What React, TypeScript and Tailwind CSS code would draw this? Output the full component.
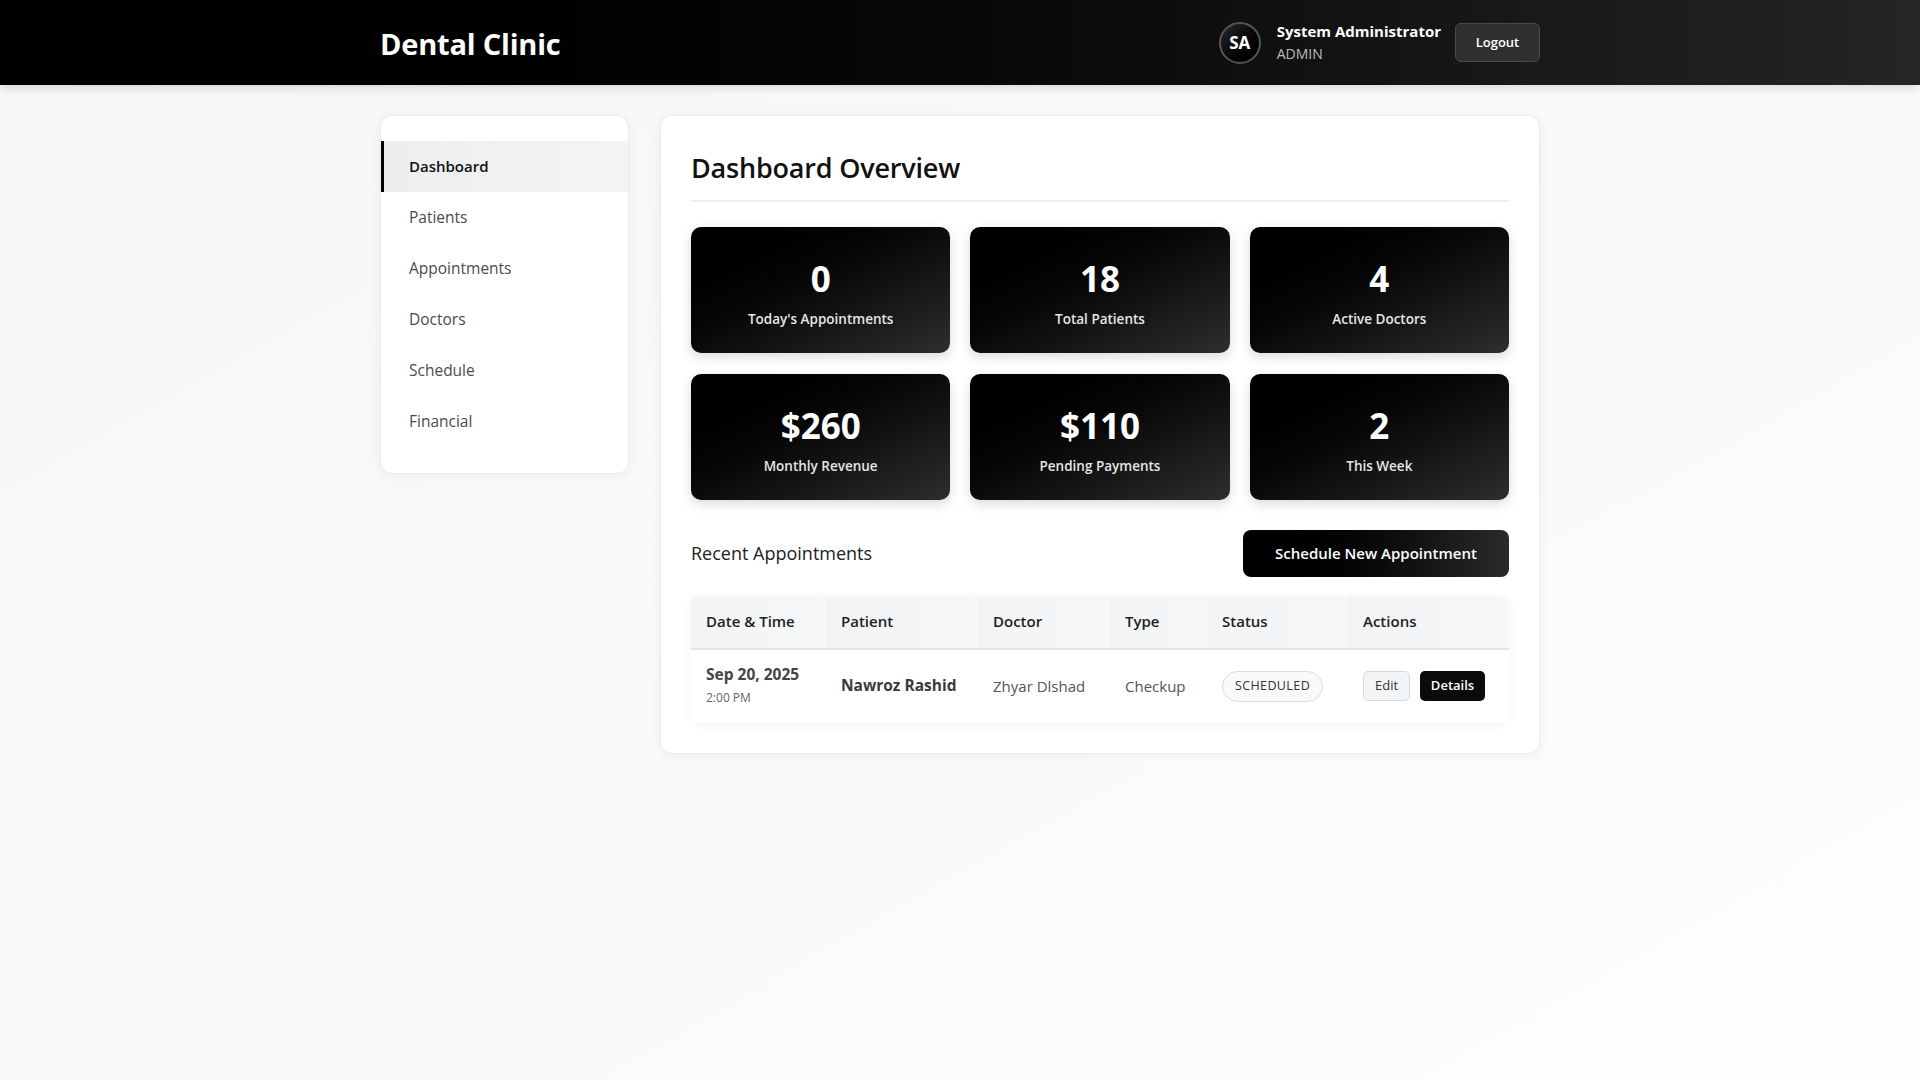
import React from 'react';

const navItems = ['Dashboard', 'Patients', 'Appointments', 'Doctors', 'Schedule', 'Financial'];

const stats = [
  { value: '0', label: "Today's Appointments" },
  { value: '18', label: 'Total Patients' },
  { value: '4', label: 'Active Doctors' },
  { value: '$260', label: 'Monthly Revenue' },
  { value: '$110', label: 'Pending Payments' },
  { value: '2', label: 'This Week' },
];

const columns = [
  { title: 'Date & Time', w: 'w-[135px]' },
  { title: 'Patient', w: 'w-[152px]' },
  { title: 'Doctor', w: 'w-[132px]' },
  { title: 'Type', w: 'w-[97px]' },
  { title: 'Status', w: 'w-[141px]' },
  { title: 'Actions', w: 'flex-1' },
];

export default function App() {
  return (
    <div
      className="min-h-screen bg-gradient-to-br from-[#f6f6f6] to-[#fdfdfd] text-[#222]"
      style={{ fontFamily: '"Open Sans", "Noto Sans", sans-serif' }}
    >
      {/* Header */}
      <header className="h-[85px] bg-gradient-to-r from-[#000] to-[#252525] shadow-[0_2px_10px_rgba(0,0,0,0.15)]">
        <div className="max-w-[1200px] mx-auto px-5 h-full flex items-center justify-between">
          <h1 className="text-[29px] font-bold text-white tracking-[-0.2px] mt-[2px]">Dental Clinic</h1>
          <div className="flex items-center">
            <div className="w-[42px] h-[42px] rounded-full bg-gradient-to-br from-[#2a2a2a] to-[#000] border-2 border-[#555] flex items-center justify-center text-white font-bold text-[17px]">
              SA
            </div>
            <div className="ml-4 flex flex-col leading-tight">
              <span className="text-white font-bold text-[15px]">System Administrator</span>
              <span className="text-[#bdbdbd] text-[14px] mt-[4px]">ADMIN</span>
            </div>
            <button className="ml-[14px] w-[85px] h-[39px] rounded-[6px] bg-[#2f2f2f] border border-[#4a4a4a] text-white text-[13px] font-semibold">
              Logout
            </button>
          </div>
        </div>
      </header>

      <div className="max-w-[1200px] mx-auto px-5 pt-[30px] flex gap-[31px] items-start">
        {/* Sidebar */}
        <aside className="w-[249px] shrink-0 bg-white rounded-[12px] border border-[#ececec] shadow-[0_2px_12px_rgba(0,0,0,0.05)] pt-[25px] pb-[26px] overflow-hidden">
          {navItems.map((item, i) => (
            <div
              key={item}
              className={
                i === 0
                  ? 'h-[51px] flex items-center pl-[25px] border-l-[3px] border-black bg-gradient-to-r from-[#eceef0] to-[#f3f4f6] text-[#111] font-semibold text-[15px]'
                  : 'h-[51px] flex items-center pl-[28px] text-[#4b4b4b] font-medium text-[15.5px]'
              }
            >
              {item}
            </div>
          ))}
        </aside>

        {/* Main */}
        <main className="flex-1 bg-white rounded-[12px] border border-[#ececec] shadow-[0_2px_12px_rgba(0,0,0,0.05)] px-[30px] pt-[32px] pb-[30px]">
          <h2 className="text-[27px] font-semibold text-[#111] pb-[11px] border-b-2 border-[#efefef] tracking-[-0.2px]">
            Dashboard Overview
          </h2>

          <div className="grid grid-cols-3 gap-x-[20px] gap-y-[21px] mt-[25px]">
            {stats.map((s) => (
              <div
                key={s.label}
                className="h-[126px] rounded-[10px] bg-gradient-to-br from-[#000] to-[#2e2e2e] shadow-[0_4px_12px_rgba(0,0,0,0.15)] flex flex-col items-center pt-[31px]"
              >
                <div className="text-white font-bold text-[35px] leading-[42px]">{s.value}</div>
                <div className="text-[#e6e6e6] font-semibold text-[13.5px] leading-[20px] mt-[9px]">{s.label}</div>
              </div>
            ))}
          </div>

          <div className="flex items-center justify-between mt-[30px]">
            <h3 className="text-[18px] text-[#222]">Recent Appointments</h3>
            <button className="w-[266px] h-[47px] rounded-[8px] bg-gradient-to-r from-[#000] to-[#2a2a2a] text-white font-semibold text-[15px]">
              Schedule New Appointment
            </button>
          </div>

          <div className="mt-[19px] rounded-[8px] overflow-hidden shadow-[0_2px_10px_rgba(0,0,0,0.06)]">
            <div className="flex h-[54px] border-b-2 border-[#e6e6e6]">
              {columns.map((c) => (
                <div
                  key={c.title}
                  className={`${c.w} flex items-center pl-[15px] bg-gradient-to-r from-[#f2f3f5] to-[#f6f7f8] text-[15px] font-semibold text-[#1f1f1f]`}
                >
                  {c.title}
                </div>
              ))}
            </div>
            <div className="flex h-[73px] items-center bg-white">
              <div className="w-[135px] pl-[15px] flex flex-col">
                <span className="font-bold text-[15.5px] text-[#444] leading-tight">Sep 20, 2025</span>
                <span className="text-[12px] text-[#666] mt-[4px]">2:00 PM</span>
              </div>
              <div className="w-[152px] pl-[15px] font-bold text-[15.5px] text-[#3a3a3a]">Nawroz Rashid</div>
              <div className="w-[132px] pl-[15px] text-[15px] text-[#555]">Zhyar Dlshad</div>
              <div className="w-[97px] pl-[15px] text-[15px] text-[#555]">Checkup</div>
              <div className="w-[141px] pl-[15px]">
                <span className="inline-flex items-center justify-center w-[101px] h-[31px] rounded-full border border-[#dcdcdc] bg-[#f9f9f9] text-[12.5px] font-medium tracking-[0.4px] text-[#333]">
                  SCHEDULED
                </span>
              </div>
              <div className="flex-1 pl-[15px] flex items-center gap-[10px]">
                <button className="w-[47px] h-[30px] rounded-[5px] border border-[#d9d9d9] bg-[#f3f4f5] text-[13px] text-[#333]">
                  Edit
                </button>
                <button className="w-[65px] h-[30px] rounded-[5px] bg-[#0b0b0b] text-white font-semibold text-[13px]">
                  Details
                </button>
              </div>
            </div>
          </div>
        </main>
      </div>
    </div>
  );
}
